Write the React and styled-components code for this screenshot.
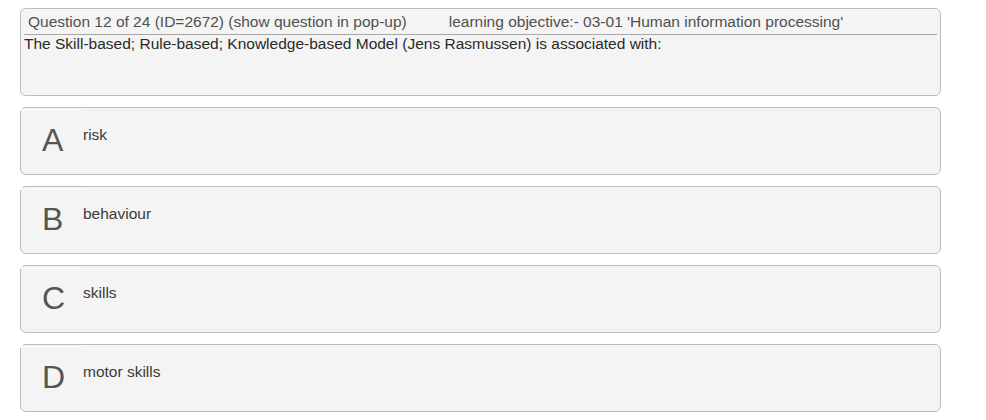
import styled, { createGlobalStyle } from "styled-components";

const GlobalStyle = createGlobalStyle`
    body {
        margin: 0;
        background: #ffffff;
        font-family: "Liberation Sans", Arial, sans-serif;
    }
`;

const options = [
    { letter: "A", text: "risk" },
    { letter: "B", text: "behaviour" },
    { letter: "C", text: "skills" },
    { letter: "D", text: "motor skills" },
];

function App() {
    return (
        <>
            <GlobalStyle />
            <Page>
                <QuestionBox>
                    <Header>
                        <span>Question 12 of 24 (ID=2672) (show question in pop-up)</span>
                        <Objective>
                            learning objective:- 03-01 'Human information processing'
                        </Objective>
                    </Header>
                    <QuestionText>
                        The Skill-based; Rule-based; Knowledge-based Model (Jens Rasmussen) is
                        associated with:
                    </QuestionText>
                </QuestionBox>
                {options.map((o) => (
                    <Option key={o.letter}>
                        <Letter>{o.letter}</Letter>
                        <AnswerText>{o.text}</AnswerText>
                    </Option>
                ))}
            </Page>
        </>
    );
}

const Page = styled.div`
    display: flex;
    flex-direction: column;
    gap: 11px;
    width: 921px;
    padding: 8px 0 0 20px;
`;

const QuestionBox = styled.div`
    box-sizing: border-box;
    height: 88px;
    background: #f4f4f4;
    border: 1px solid #bcbcbc;
    border-radius: 6px;
    padding: 3px 3px 0 3px;
`;

const Header = styled.div`
    display: flex;
    white-space: nowrap;
    padding: 1px 0 3px 4px;
    border-bottom: 1px solid #a9a9a9;
    font-size: 15.5px;
    line-height: 18px;
    color: #505050;
`;

const Objective = styled.span`
    margin-left: 42px;
`;

const QuestionText = styled.div`
    font-size: 15.5px;
    line-height: 18px;
    color: #2a2a2a;
    white-space: nowrap;
`;

const Option = styled.div`
    box-sizing: border-box;
    height: 68px;
    display: flex;
    align-items: flex-start;
    background: #f4f4f4;
    border: 1px solid #bcbcbc;
    border-radius: 6px;
`;

const Letter = styled.div`
    box-sizing: border-box;
    width: 60px;
    margin-top: 1px;
    padding: 10px 0 0 21px;
    border-top: 2px solid #fafafa;
    font-size: 32px;
    line-height: 38px;
    color: #555;
`;

const AnswerText = styled.div`
    padding: 17px 0 0 2px;
    font-size: 15.5px;
    line-height: 20px;
    color: #3a3a3a;
`;

export default App;
